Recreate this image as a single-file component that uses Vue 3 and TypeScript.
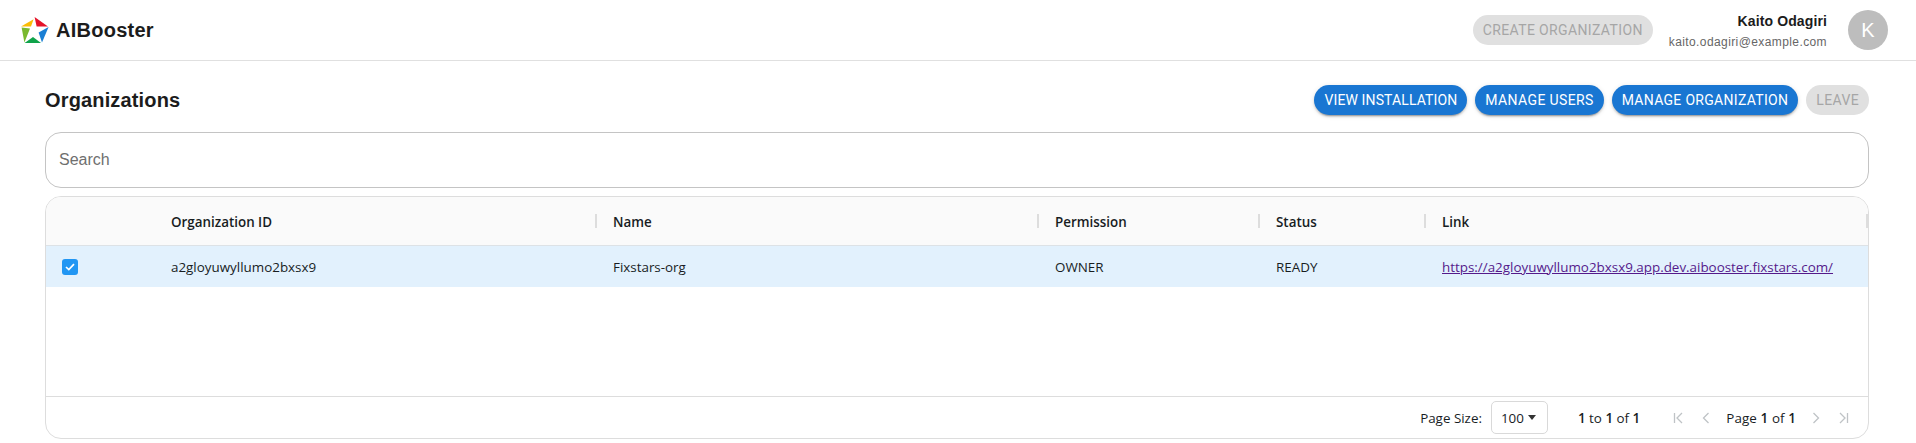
<script setup lang="ts">
interface Column { key: string; label: string; width: number }
const columns: Column[] = [
  { key: 'id', label: 'Organization ID', width: 442 },
  { key: 'name', label: 'Name', width: 442 },
  { key: 'perm', label: 'Permission', width: 221 },
  { key: 'status', label: 'Status', width: 166 },
  { key: 'link', label: 'Link', width: 444 },
]
const gridTemplate = '107px ' + columns.map((c) => c.width + 'px').join(' ')
const url = 'https://a2gloyuwyllumo2bxsx9.app.dev.aibooster.fixstars.com/'
</script>

<template>
  <div class="page">
    <header class="topbar">
      <div class="brand">
        <svg class="logo" width="30" height="28" viewBox="0 0 30 28">
          <polygon points="14.6,1 28,10.6 16.6,10.6" fill="#e5132a" />
          <polygon points="1,10.6 13.6,3.2 11,10.4" fill="#fbbc05" />
          <polygon points="28.6,11 22,26.6 18.6,16.6" fill="#1a7fd4" />
          <polygon points="21,27 4.6,27 13,21" fill="#0fa34a" />
          <polygon points="1.6,11.4 10,12.6 4.4,26.6" fill="#7ab92f" />
        </svg>
        <span class="brand-name">AIBooster</span>
      </div>
      <div class="account">
        <button class="btn" disabled>CREATE ORGANIZATION</button>
        <div class="user">
          <div class="user-name">Kaito Odagiri</div>
          <div class="user-mail">kaito.odagiri@example.com</div>
        </div>
        <div class="avatar">K</div>
      </div>
    </header>

    <main class="content">
      <div class="title-row">
        <h1 class="title">Organizations</h1>
        <div class="actions">
          <button class="btn primary tight">VIEW INSTALLATION</button>
          <button class="btn primary">MANAGE USERS</button>
          <button class="btn primary org">MANAGE ORGANIZATION</button>
          <button class="btn" disabled>LEAVE</button>
        </div>
      </div>

      <div class="search">Search</div>

      <section class="grid">
        <div class="head row" :style="{ gridTemplateColumns: gridTemplate }">
          <div class="cell"></div>
          <div v-for="c in columns" :key="c.key" class="cell head-cell">{{ c.label }}</div>
        </div>
        <div class="data row" :style="{ gridTemplateColumns: gridTemplate }">
          <div class="cell check-cell">
            <span class="check">
              <svg width="10" height="8" viewBox="0 0 10 8">
                <path d="M1 4l2.8 2.6L9 1.2" fill="none" stroke="#fff" stroke-width="1.7" />
              </svg>
            </span>
          </div>
          <div class="cell">a2gloyuwyllumo2bxsx9</div>
          <div class="cell">Fixstars-org</div>
          <div class="cell">OWNER</div>
          <div class="cell">READY</div>
          <div class="cell"><a class="link" :href="url">{{ url }}</a></div>
        </div>
        <div class="body-space"></div>
        <footer class="pager">
          <span>Page Size:</span>
          <span class="size">100<i class="caret"></i></span>
          <span class="count"><b>1</b> to <b>1</b> of <b>1</b></span>
          <span class="nav">
            <svg width="16" height="16" viewBox="0 0 16 16"><path d="M4.500 3v10M12 3L7 8l5 5" /></svg>
            <svg width="16" height="16" viewBox="0 0 16 16"><path d="M10.500 3L5.500 8l5 5" /></svg>
            <span class="page-label">Page <b>1</b> of <b>1</b></span>
            <svg width="16" height="16" viewBox="0 0 16 16"><path d="M5.500 3l5 5-5 5" /></svg>
            <svg width="16" height="16" viewBox="0 0 16 16"><path d="M11.500 3v10M4 3l5 5-5 5" /></svg>
          </span>
        </footer>
      </section>
    </main>
  </div>
</template>

<style>
body { background: #fff; }
</style>

<style scoped>
.page {
  width: 1916px;
  height: 443px;
  overflow: hidden;
  background: #fff;
  color: #1c1c1c;
  font-family: "Liberation Sans", Arial, sans-serif;
}
.topbar {
  height: 60px;
  border-bottom: 1px solid #e0e0e0;
  display: flex;
  align-items: center;
  justify-content: space-between;
  padding: 0 28px 0 20px;
}
.brand { display: flex; align-items: center; gap: 6px; }
.logo { display: block; }
.brand-name { font-size: 20px; font-weight: 700; letter-spacing: 0.25px; }
.account { display: flex; align-items: center; }
.user { margin: 0 21px 0 16px; text-align: right; }
.user-name { font-size: 14px; font-weight: 700; letter-spacing: 0.12px; line-height: 20px; margin-bottom: 3px; }
.user-mail { font-size: 12px; letter-spacing: 0.4px; color: #666; line-height: 16px; }
.avatar {
  width: 40px;
  height: 40px;
  border-radius: 50%;
  background: #bdbdbd;
  color: #fff;
  font-size: 20px;
  display: flex;
  align-items: center;
  justify-content: center;
}
.btn {
  height: 30px;
  padding: 0 10px;
  border: 0;
  border-radius: 15px;
  background: #e0e0e0;
  color: #a6a6a6;
  font-family: Roboto, sans-serif;
  font-size: 14px;
  font-weight: 400;
  letter-spacing: 0.37px;
  white-space: nowrap;
}
.btn.primary {
  background: #1976d2;
  color: #fff;
  box-shadow: 0 3px 1px -2px rgba(0,0,0,.2), 0 2px 2px 0 rgba(0,0,0,.14), 0 1px 5px 0 rgba(0,0,0,.12);
}
.btn.tight { letter-spacing: 0.12px; }
.btn.org { letter-spacing: 0.3px; }
.content { padding: 0 47px 0 45px; }
.title-row {
  display: flex;
  align-items: center;
  justify-content: space-between;
  padding-top: 24px;
  height: 30px;
}
.title { margin: 0; font-size: 20px; font-weight: 700; letter-spacing: 0.15px; }
.actions { display: flex; gap: 8px; }
.search {
  margin-top: 17px;
  height: 54px;
  border: 1px solid #c4c4c4;
  border-radius: 16px;
  display: flex;
  align-items: center;
  padding-left: 13px;
  font-size: 16px;
  color: #6f6f6f;
}
.grid {
  margin-top: 8px;
  height: 241px;
  border: 1px solid #dddddd;
  border-radius: 16px;
  overflow: hidden;
  display: flex;
  flex-direction: column;
  font-family: "Open Sans", "Noto Sans", sans-serif;
  font-size: 13.4px;
  color: #181d1f;
}
.row { display: grid; align-items: center; }
.head {
  height: 48px;
  background: #fafafa;
  border-bottom: 1px solid #dde2e6;
}
.head-cell { font-weight: 600; position: relative; padding-top: 1px; }
.head-cell::before {
  content: "";
  position: absolute;
  left: 0;
  top: 50%;
  width: 2px;
  height: 14px;
  margin-top: -7px;
  background: #dddddd;
}
.head-cell:nth-child(2)::before { display: none; }
.head-cell:last-child::after {
  content: "";
  position: absolute;
  right: 0;
  top: 50%;
  width: 2px;
  height: 14px;
  margin-top: -7px;
  background: #dddddd;
}
.cell { padding-left: 18px; white-space: nowrap; line-height: 20px; }
.data { height: 41px; background: #e2f1fd; }
.check-cell { padding-left: 16px; display: flex; }
.check {
  width: 16px;
  height: 16px;
  border-radius: 3px;
  background: #2196f3;
  display: flex;
  align-items: center;
  justify-content: center;
}
.link { color: #551a8b; text-decoration: underline; }
.body-space { flex: 1; }
.pager {
  height: 41px;
  border-top: 1px solid #dddddd;
  display: flex;
  align-items: center;
  justify-content: flex-end;
  padding-right: 16px;
}
.size {
  margin-left: 9px;
  width: 57px;
  height: 33px;
  box-sizing: border-box;
  border: 1px solid #d9d9d9;
  border-radius: 5px;
  display: flex;
  align-items: center;
  padding-left: 9px;
}
.caret {
  margin-left: 4px;
  border-left: 4px solid transparent;
  border-right: 4px solid transparent;
  border-top: 5px solid #333;
}
.count { margin-left: 30px; }
.pager b { font-weight: 600; }
.nav { margin-left: 30px; display: flex; align-items: center; gap: 12px; }
.nav svg { fill: none; stroke: #bfc3c6; stroke-width: 1.3; }
.page-label { letter-spacing: 0.1px; }
</style>
